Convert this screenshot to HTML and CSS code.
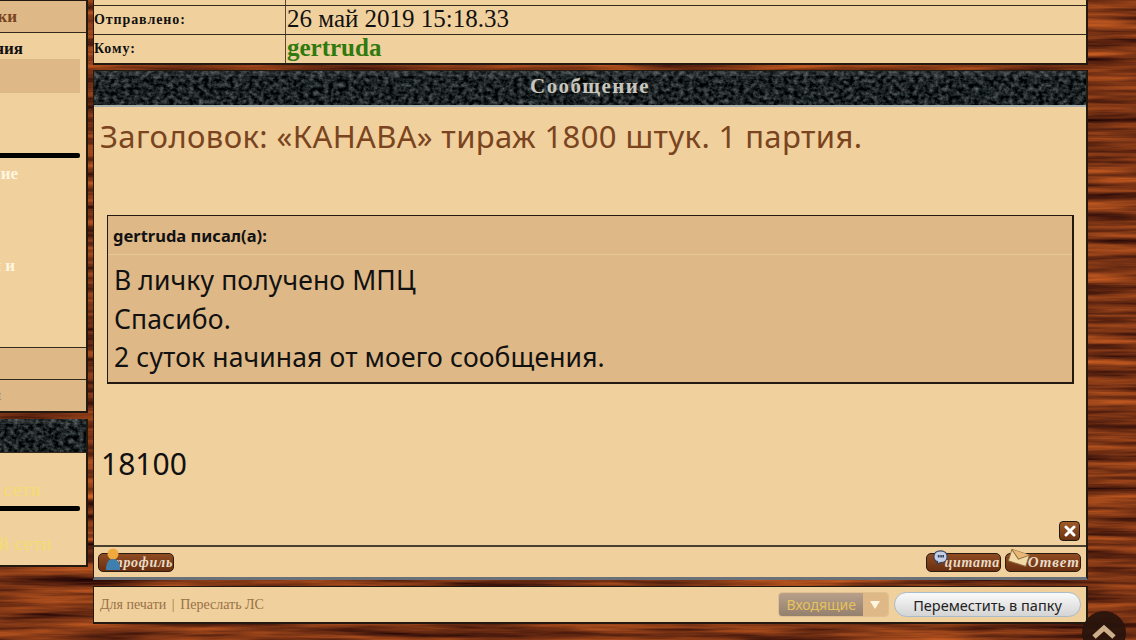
FILE: index.html
```html
<!DOCTYPE html>
<html lang="ru">
<head>
  <meta charset="UTF-8">
  <title>Сообщение</title>
  <link rel="stylesheet" href="styles.css">
</head>
<body>

  <!-- wood and stone textures -->
  <svg class="wood" width="1136" height="640">
    <defs>
      <filter id="woodGrain" x="0" y="0" width="100%" height="100%" color-interpolation-filters="sRGB">
        <feTurbulence type="fractalNoise" baseFrequency="0.007 0.13" numOctaves="4" seed="7"/>
        <feColorMatrix values="0.95 0 0 0 0  0.5 0 0 0 -0.05  0.16 0 0 0 0  0 0 0 0 1"/>
      </filter>
      <filter id="stone" x="0" y="0" width="100%" height="100%" color-interpolation-filters="sRGB">
        <feTurbulence type="fractalNoise" baseFrequency="0.2 0.24" numOctaves="4" seed="3"/>
        <feColorMatrix values="0.62 0 0 0 -0.2  0.62 0 0 0 -0.175  0.62 0 0 0 -0.17  0 0 0 0 1"/>
      </filter>
    </defs>
    <rect width="1136" height="640" filter="url(#woodGrain)"/>
  </svg>

  <div class="page">

    <aside class="sidebar">
      <div class="side-box">
        <div class="side-row row-top"><span>Закладки</span></div>
        <div class="side-list">
          <div class="side-title">Уведомления</div>
          <div class="side-active"></div>
          <div class="side-bar"></div>
          <div class="side-light">Обсуждение</div>
          <div class="side-light side-light-2">Новости и</div>
        </div>
        <div class="side-row row-plain"></div>
        <div class="side-row row-last"><span>Настройки</span></div>
      </div>
      <div class="side-box side-box-2">
        <svg class="stone-bar side-stone" width="237" height="33">
          <rect width="237" height="33" filter="url(#stone)"/>
          <rect width="237" height="5" fill="#fff" opacity="0.08"/>
        </svg>
        <div class="side-net">
          <div class="net-line net-one">В социальной сети</div>
          <div class="side-bar bar-net"></div>
          <div class="net-line net-two">В другой сети</div>
        </div>
      </div>
    </aside>

    <main class="content">
      <section class="info">
        <div class="info-row row-cut">
          <div class="info-label"></div>
          <div class="info-value"></div>
        </div>
        <div class="info-row">
          <div class="info-label">Отправлено:</div>
          <div class="info-value">26 май 2019 15:18.33</div>
        </div>
        <div class="info-row">
          <div class="info-label">Кому:</div>
          <div class="info-value name">gertruda</div>
        </div>
      </section>

      <section class="message">
        <div class="message-head">
          <svg class="stone-bar" width="992" height="34">
            <rect width="992" height="34" filter="url(#stone)"/>
            <rect width="992" height="5" fill="#fff" opacity="0.08"/>
          </svg>
          <h2>Сообщение</h2>
        </div>

        <div class="message-body">
          <h1>Заголовок: «КАНАВА» тираж 1800 штук. 1 партия.</h1>

          <div class="quote">
            <div class="quote-head">gertruda писал(а):</div>
            <div class="quote-text">
              <p>В личку получено МПЦ</p>
              <p>Спасибо.</p>
              <p>2 суток начиная от моего сообщения.</p>
            </div>
          </div>

          <p class="reply-text">18100</p>

          <div class="delete-row">
            <a class="btn-close">
              <svg width="12" height="12" viewBox="0 0 12 12"><path d="M2 2 L10 10 M10 2 L2 10" stroke="#fff" stroke-width="3" stroke-linecap="round"/></svg>
            </a>
          </div>
        </div>

        <div class="message-actions">
          <a class="btn btn-profile">
            <svg class="btn-icon icon-person" width="14" height="23" viewBox="0 0 14 23">
              <circle cx="7" cy="6" r="5.500" fill="#f0a93c"/>
              <path d="M0 22 C0 14 3 11 7 11 C11 11 14 14 14 22 Z" fill="#3f7fb0"/>
            </svg>
            профиль
          </a>
          <div class="actions-right">
            <a class="btn btn-quote">
              <svg class="btn-icon icon-bubble" width="15" height="15" viewBox="0 0 18 18">
                <path d="M9 1 C14 1 17 4 17 8 C17 12 14 15 9 15 L5 17 L5.500 14 C3 13 1 11 1 8 C1 4 4 1 9 1 Z" fill="#c5d0e6" stroke="#34425e" stroke-width="1.500"/>
                <path d="M6.500 6 v3 M8.500 6 v3 M10.500 6 v3 M12.500 6 v3" stroke="#34425e" stroke-width="1.500"/>
              </svg>
              цитата
            </a>
            <a class="btn btn-answer">
              <svg class="btn-icon icon-mail" width="22" height="19" viewBox="0 0 24 20">
                <g transform="rotate(18 12 10)">
                  <rect x="2" y="4" width="20" height="13" fill="#f2d9a6" stroke="#8a6a3a"/>
                  <path d="M2 4 L12 12 L22 4" fill="#e8b878" stroke="#8a6a3a"/>
                </g>
              </svg>
              Ответ
            </a>
          </div>
        </div>
      </section>

      <section class="tools">
        <div class="tools-links">
          <a>Для печати</a>
          <span class="sep">|</span>
          <a>Переслать ЛС</a>
        </div>
        <div class="tools-move">
          <div class="folder-select">
            <span class="folder-name">Входящие</span>
            <span class="folder-arrow"></span>
          </div>
          <button class="move-btn">Переместить в папку</button>
        </div>
      </section>
    </main>
  </div>

  <a class="to-top">
    <svg width="26" height="16" viewBox="0 0 26 16"><path d="M3 14 L13 5 L23 14" fill="none" stroke="#cdb08a" stroke-width="5"/></svg>
  </a>

</body>
</html>
```

FILE: styles.css
```css
html, body {
  margin: 0;
  height: 640px;
  overflow: hidden;
}

body {
  position: relative;
  font-family: "Noto Sans", sans-serif;
  background: #6e3312;
  color: #111;
}

.wood {
  position: absolute;
  top: 0;
  left: 0;
}

.page {
  position: relative;
  display: flex;
  align-items: flex-start;
  gap: 5px;
  width: 1088px;
}

/* sidebar, cut off by the left window edge */

.sidebar {
  flex: none;
  width: 240px;
  margin-left: -152px;
  font-family: "Liberation Serif", serif;
  font-weight: bold;
}

.side-box {
  background: #f0d09c;
  border: 1px solid #221a10;
  border-width: 1px 2px 2px 1px;
  text-align: right;
}

.side-box-2 {
  height: 146px;
  margin-top: 6px;
  border-top: none;
}

.side-row {
  display: flex;
  align-items: center;
  justify-content: flex-end;
  height: 31px;
  padding-right: 69px;
  background: #deb887;
  color: #7a4420;
  font-size: 17px;
}

.row-top {
  border-bottom: 1px solid #332a1c;
}

.row-plain {
  border-top: 1px solid #332a1c;
}

.row-last {
  border-top: 1px solid #332a1c;
  padding-right: 85px;
  font-size: 15px;
}

.side-list {
  height: 314px;
  padding-top: 6px;
  box-sizing: border-box;
}

.side-title {
  height: 20px;
  padding-right: 63px;
  font-size: 17px;
  line-height: 19px;
  color: #111;
}

.side-active {
  height: 34px;
  margin-right: 6px;
  background: #deb887;
}

.side-bar {
  height: 5px;
  margin: 60px 6px 0 0;
  background: #000;
  border-radius: 2px;
}

.side-light {
  margin-top: 6px;
  padding-right: 68px;
  font-size: 17px;
  line-height: 19px;
  color: #fff6e0;
}

.side-light-2 {
  margin-top: 73px;
  padding-right: 71px;
}

.stone-bar {
  display: block;
}

.side-stone {
  border-bottom: 1px solid #332a1c;
}

.side-net {
  padding-top: 27px;
}

.net-line {
  font-size: 19px;
  font-weight: normal;
  line-height: 20px;
  letter-spacing: 0.5px;
  color: #f6dc70;
}

.net-one {
  padding-right: 45px;
}

.net-two {
  margin-top: 23px;
  padding-right: 34px;
}

.bar-net {
  margin-top: 6px;
}

/* main column */

.content {
  flex: none;
  width: 995px;
}

.info {
  background: #f0d09c;
  border: 1px solid #221a10;
  border-width: 0 2px 2px 1px;
  font-family: "Liberation Serif", serif;
}

.info-row {
  display: flex;
  height: 28px;
  border-bottom: 1px solid #332a1c;
}

.info-row:last-child {
  border-bottom: none;
}

.row-cut {
  height: 5px;
}

.info-label {
  flex: none;
  width: 191px;
  border-right: 1px solid #554a38;
  font-size: 14px;
  font-weight: bold;
  line-height: 28px;
  letter-spacing: 0.9px;
}

.info-value {
  padding-left: 1px;
  font-size: 25px;
  line-height: 26px;
}

.name {
  color: #2f7a0e;
  font-weight: bold;
}

.message {
  margin-top: 5px;
  background: #f0d09c;
  border: 1px solid #221a10;
  border-width: 1px 2px 3px 1px;
  border-bottom-color: #6a7078;
}

.message-head {
  position: relative;
  border-bottom: 2px solid #a9adab;
}

.message-head h2 {
  position: absolute;
  top: 0;
  left: 0;
  right: 0;
  margin: 0;
  font-family: "Liberation Serif", serif;
  font-size: 21px;
  line-height: 31px;
  letter-spacing: 1.400px;
  color: #c8c6bc;
  text-align: center;
}

.message-body {
  height: 440px;
  padding: 0 6px;
  border-bottom: 2px solid #4a4030;
  box-sizing: border-box;
}

.message-body h1 {
  margin: 0;
  padding-top: 11px;
  padding-bottom: 2px;
  font-size: 31px;
  font-weight: normal;
  line-height: 36px;
  letter-spacing: 0.400px;
  color: #7a4420;
}

.quote {
  margin: 59px 6px 0 7px;
  background: #deb887;
  border: 1px solid #221a10;
  border-right-width: 2px;
  border-bottom-width: 2px;
}

.quote-head {
  height: 38px;
  padding-left: 5px;
  border-bottom: 1px solid #e8c898;
  font-size: 16.500px;
  font-weight: bold;
  line-height: 40px;
}

.quote-text {
  padding: 6px 6px 5px;
}

.quote-text p {
  margin: 0;
  font-size: 26.500px;
  line-height: 38.500px;
  letter-spacing: 0.120px;
}

.reply-text {
  margin: 60px 1px 0;
  font-size: 30px;
  line-height: 40px;
}

.delete-row {
  display: flex;
  justify-content: flex-end;
  margin: 37px 0 0 0;
}

.btn-close {
  display: flex;
  align-items: center;
  justify-content: center;
  width: 19px;
  height: 18px;
  background: linear-gradient(#a05a28, #6a3212);
  border: 1px solid #221a10;
  border-radius: 4px;
}

.message-actions {
  display: flex;
  justify-content: space-between;
  align-items: center;
  height: 30px;
  padding: 0 5px 0 4px;
}

.actions-right {
  display: flex;
  gap: 4px;
}

.btn {
  position: relative;
  box-sizing: border-box;
  display: block;
  height: 19px;
  margin-top: 1px;
  background: linear-gradient(#8f4c22, #6a2f10);
  border: 1px solid #2a1c10;
  border-radius: 5px;
  font-family: "Liberation Serif", serif;
  font-style: italic;
  font-weight: bold;
  font-size: 14px;
  line-height: 17px;
  letter-spacing: 0.7px;
  color: #e8dcc8;
  text-align: right;
}

.btn-profile {
  width: 76px;
}

.btn-quote {
  width: 75px;
}

.btn-answer {
  width: 76px;
  font-size: 15px;
  letter-spacing: 1px;
}

.btn-icon {
  position: absolute;
}

.icon-person {
  top: -6px;
  left: 7px;
}

.icon-bubble {
  top: -4px;
  left: 6px;
}

.icon-mail {
  top: -6px;
  left: 2px;
}

/* bottom tools */

.tools {
  display: flex;
  justify-content: space-between;
  align-items: center;
  height: 35px;
  margin-top: 6px;
  padding: 0 5px 0 6px;
  background: #f0d09c;
  border: 1px solid #221a10;
  border-width: 1px 2px 2px 1px;
}

.tools-links {
  font-family: "Liberation Serif", serif;
  font-size: 14px;
  color: #9a7048;
}

.sep {
  margin: 0 2px;
}

.tools-move {
  display: flex;
  align-items: center;
  gap: 5px;
}

.folder-select {
  display: flex;
  box-sizing: border-box;
  height: 25px;
  border: 1px solid #e0c090;
  border-radius: 4px;
  overflow: hidden;
}

.folder-name {
  padding: 0 7px;
  background: linear-gradient(#b8a08a, #94806e);
  font-size: 14px;
  line-height: 24px;
  color: #e6c25c;
}

.folder-arrow {
  position: relative;
  width: 25px;
  background: #deb887;
}

.folder-arrow::after {
  content: "";
  position: absolute;
  top: 8px;
  left: 7px;
  border: 5px solid transparent;
  border-top: 8px solid #fff6e0;
  border-bottom: none;
}

.move-btn {
  width: 187px;
  height: 25px;
  padding: 0;
  background: linear-gradient(#fafafa, #d4d4d4);
  border: 1px solid #a8bccc;
  border-radius: 13px;
  font-family: "Noto Sans", sans-serif;
  font-size: 14.500px;
  color: #222;
}

.to-top {
  position: absolute;
  top: 611px;
  left: 1082px;
  display: flex;
  justify-content: center;
  width: 44px;
  height: 44px;
  padding-top: 12px;
  box-sizing: border-box;
  background: rgba(40, 20, 12, 0.92);
  border-radius: 50%;
}
```
